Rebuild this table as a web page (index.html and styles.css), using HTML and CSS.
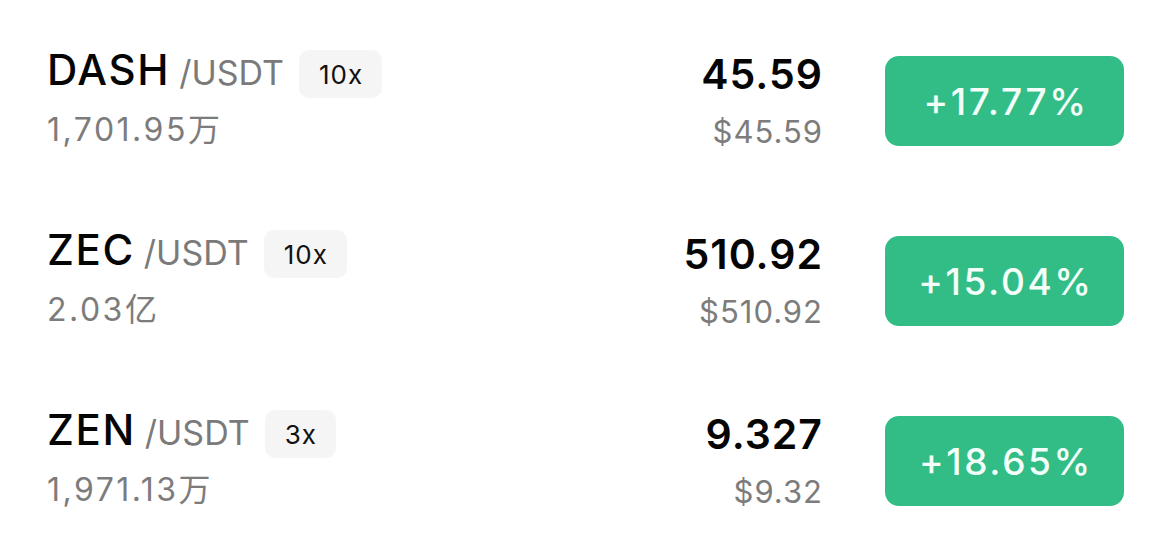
FILE: index.html
```html
<!DOCTYPE html>
<html lang="zh-CN">
<head>
<meta charset="utf-8">
<title>Markets</title>
<link rel="stylesheet" href="styles.css">
</head>
<body>
<div class="list">
  <div class="row">
    <div class="info">
      <div class="name-row">
        <span class="pair"><span class="base">DASH</span><span class="quote">/USDT</span></span>
        <span class="badge">10x</span>
      </div>
      <div class="volume">1,701.95万</div>
    </div>
    <div class="price">
      <div class="last">45.59</div>
      <div class="usd">$45.59</div>
    </div>
    <div class="change">+17.77%</div>
  </div>
  <div class="row">
    <div class="info">
      <div class="name-row">
        <span class="pair"><span class="base">ZEC</span><span class="quote">/USDT</span></span>
        <span class="badge">10x</span>
      </div>
      <div class="volume">2.03亿</div>
    </div>
    <div class="price">
      <div class="last">510.92</div>
      <div class="usd">$510.92</div>
    </div>
    <div class="change">+15.04%</div>
  </div>
  <div class="row">
    <div class="info">
      <div class="name-row">
        <span class="pair"><span class="base">ZEN</span><span class="quote">/USDT</span></span>
        <span class="badge">3x</span>
      </div>
      <div class="volume">1,971.13万</div>
    </div>
    <div class="price">
      <div class="last">9.327</div>
      <div class="usd">$9.32</div>
    </div>
    <div class="change">+18.65%</div>
  </div>
</div>
</body>
</html>
```

FILE: styles.css
```css
* { box-sizing: border-box; }
html, body {
  margin: 0;
  padding: 0;
  background: #ffffff;
}
body {
  font-family: Inter, "Noto Sans CJK SC", sans-serif;
  color: #0a0a0a;
}
.list {
  padding-top: 12px;
}
.row {
  display: flex;
  align-items: flex-start;
  height: 180px;
  padding: 38px 46px 0 47px;
}
.info {
  flex: 1;
  display: flex;
  flex-direction: column;
}
.name-row {
  display: flex;
  align-items: center;
  height: 48px;
  gap: 15px;
}
.pair {
  line-height: 48px;
  white-space: nowrap;
}
.base {
  font-size: 42px;
  font-weight: 500;
  letter-spacing: 1.6px;
  color: #050505;
}
.quote {
  font-size: 34px;
  font-weight: 400;
  color: #7a7a7a;
  margin-left: 9px;
}
.badge {
  display: flex;
  align-items: center;
  justify-content: center;
  height: 48px;
  padding: 0 19px 0 20px;
  border-radius: 10px;
  background: #f5f5f5;
  font-size: 26px;
  letter-spacing: 1px;
  color: #111;
}
.volume {
  margin-top: 12px;
  font-size: 32px;
  line-height: 40px;
  letter-spacing: 2.5px;
  color: #7c7c7c;
}
.price {
  display: flex;
  flex-direction: column;
  align-items: flex-end;
}
.last {
  font-size: 41px;
  line-height: 48px;
  font-weight: 600;
  letter-spacing: 1px;
  color: #050505;
}
.usd {
  margin-top: 14px;
  font-size: 31px;
  line-height: 40px;
  letter-spacing: 1px;
  color: #7c7c7c;
}
.change {
  margin-left: 62px;
  margin-top: 6px;
  width: 239px;
  height: 90px;
  border-radius: 14px;
  background: #32bd87;
  color: #f4fff9;
  display: flex;
  align-items: center;
  justify-content: center;
  font-size: 37px;
  font-weight: 500;
  letter-spacing: 2.6px;
  padding-left: 3px;
}
```
